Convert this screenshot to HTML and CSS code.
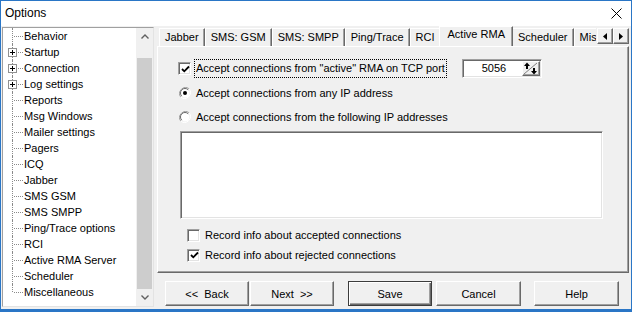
FILE: index.html
```html
<!DOCTYPE html>
<html>
<head>
<meta charset="utf-8">
<link rel="stylesheet" href="styles.css">
</head>
<body>
<div class="window">
  <div class="titlebar">
    <span class="title">Options</span>
    <svg class="close" width="11" height="11" viewBox="0 0 11 11"><path d="M0.5 0.5 L10.5 10.5 M10.5 0.5 L0.5 10.5" stroke="#000" stroke-width="1"/></svg>
  </div>
  <div class="client">
    <div class="tree">
      <ul class="tree-list">
        <li class="node first">Behavior</li>
        <li class="node"><span class="plus"></span>Startup</li>
        <li class="node"><span class="plus"></span>Connection</li>
        <li class="node"><span class="plus"></span>Log settings</li>
        <li class="node">Reports</li>
        <li class="node">Msg Windows</li>
        <li class="node">Mailer settings</li>
        <li class="node">Pagers</li>
        <li class="node">ICQ</li>
        <li class="node">Jabber</li>
        <li class="node">SMS GSM</li>
        <li class="node">SMS SMPP</li>
        <li class="node">Ping/Trace options</li>
        <li class="node">RCI</li>
        <li class="node">Active RMA Server</li>
        <li class="node">Scheduler</li>
        <li class="node last">Miscellaneous</li>
      </ul>
      <div class="vscroll">
        <div class="sb-btn"><svg width="8" height="5" viewBox="0 0 8 5"><path d="M0.5 4.5 L4 1 L7.5 4.5" fill="none" stroke="#606060" stroke-width="1.4"/></svg></div>
        <div class="sb-track"><div class="sb-thumb"></div></div>
        <div class="sb-btn"><svg width="8" height="5" viewBox="0 0 8 5"><path d="M0.5 0.5 L4 4 L7.5 0.5" fill="none" stroke="#606060" stroke-width="1.4"/></svg></div>
      </div>
    </div>
    <div class="main">
      <div class="tabctl">
        <div class="tabs">
          <div class="tab">Jabber</div>
          <div class="tab">SMS: GSM</div>
          <div class="tab">SMS: SMPP</div>
          <div class="tab">Ping/Trace</div>
          <div class="tab">RCI</div>
          <div class="tab active">Active RMA</div>
          <div class="tab">Scheduler</div>
          <div class="tab">Miscellaneous</div>
        </div>
        <div class="tab-arrows">
          <div class="arrow-btn"><svg width="4" height="7" viewBox="0 0 4 7"><path d="M4 0 L0 3.5 L4 7 Z" fill="#000"/></svg></div>
          <div class="arrow-btn"><svg width="4" height="7" viewBox="0 0 4 7"><path d="M0 0 L4 3.5 L0 7 Z" fill="#000"/></svg></div>
        </div>
        <div class="panel">
          <div class="row row-port">
            <span class="check checked"><svg width="9" height="9" viewBox="0 0 9 9"><path d="M1 4 L3.3 6.3 L8 1.5" fill="none" stroke="#000" stroke-width="1.8"/></svg></span>
            <span class="focus-label">Accept connections from "active" RMA on TCP port</span>
            <span class="spin">
              <span class="spin-value">5056</span>
              <span class="spin-btn"><svg width="15" height="13" viewBox="0 0 15 13"><path d="M4 0.5 L1 4 L3 4 L3 7 L5 7 L5 4 L7 4 Z" fill="#000"/><path d="M1 12 L14 1" stroke="#808080" stroke-width="1"/><path d="M11 12.5 L8 9 L10 9 L10 6 L12 6 L12 9 L14 9 Z" fill="#000"/></svg></span>
            </span>
          </div>
          <div class="row row-radio1">
            <span class="radio"><svg width="12" height="12" viewBox="0 0 12 12"><path d="M10.2 1.8 A6 6 0 0 0 1.8 10.2" fill="none" stroke="#a0a0a0" stroke-width="1"/><path d="M1.8 10.2 A6 6 0 0 0 10.2 1.8" fill="none" stroke="#fff" stroke-width="1"/><circle cx="6" cy="6" r="4.5" fill="#fff"/><path d="M9.2 2.8 A4.5 4.5 0 0 0 2.8 9.2" fill="none" stroke="#696969" stroke-width="1"/><circle cx="6" cy="6" r="2" fill="#000"/></svg></span>
            <span class="label">Accept connections from any IP address</span>
          </div>
          <div class="row row-radio2">
            <span class="radio"><svg width="12" height="12" viewBox="0 0 12 12"><path d="M10.2 1.8 A6 6 0 0 0 1.8 10.2" fill="none" stroke="#a0a0a0" stroke-width="1"/><path d="M1.8 10.2 A6 6 0 0 0 10.2 1.8" fill="none" stroke="#fff" stroke-width="1"/><circle cx="6" cy="6" r="4.5" fill="#fff"/><path d="M9.2 2.8 A4.5 4.5 0 0 0 2.8 9.2" fill="none" stroke="#696969" stroke-width="1"/></svg></span>
            <span class="label">Accept connections from the following IP addresses</span>
          </div>
          <div class="listbox"></div>
          <div class="row row-rec1">
            <span class="check"></span>
            <span class="label">Record info about accepted connections</span>
          </div>
          <div class="row row-rec2">
            <span class="check checked"><svg width="9" height="9" viewBox="0 0 9 9"><path d="M1 4 L3.3 6.3 L8 1.5" fill="none" stroke="#000" stroke-width="1.8"/></svg></span>
            <span class="label">Record info about rejected connections</span>
          </div>
        </div>
      </div>
      <div class="buttons">
        <button class="btn btn-back">&lt;&lt;&nbsp; Back</button>
        <button class="btn btn-next">Next&nbsp; &gt;&gt;</button>
        <button class="btn btn-save">Save</button>
        <button class="btn btn-cancel">Cancel</button>
        <button class="btn btn-help">Help</button>
      </div>
    </div>
  </div>
</div>
</body>
</html>
```

FILE: styles.css
```css
* { box-sizing: border-box; }

body {
  margin: 0;
  font-family: "Liberation Sans", Arial, sans-serif;
  font-size: 11px;
  color: #000;
  background: #f0f0f0;
}

.window {
  width: 632px;
  height: 312px;
  border: 1px solid #2a76c6;
  border-bottom-width: 3px;
  background: #f0f0f0;
  display: flex;
  flex-direction: column;
  overflow: hidden;
}

.titlebar {
  height: 25px;
  flex: none;
  background: #fff;
  display: flex;
  align-items: center;
  justify-content: space-between;
  padding: 0 9px 1px 4px;
}

.title {
  font-size: 12px;
  font-family: "Liberation Sans", Arial, sans-serif;
}

.client {
  flex: 1;
  display: flex;
  padding-left: 1px;
  min-height: 0;
  min-width: 0;
}

/* ---------- tree ---------- */
.tree {
  flex: none;
  width: 152px;
  height: 280px;
  margin-top: 1px;
  display: flex;
  background: #fff;
  border: 1px solid;
  border-color: #a0a0a0 #e3e3e3 #e3e3e3 #a0a0a0;
}

.tree-list {
  flex: 1;
  list-style: none;
  margin: 0;
  padding: 0;
  min-width: 0;
}

.node {
  position: relative;
  height: 16px;
  line-height: 16px;
  padding-left: 21px;
  white-space: nowrap;
}

.node::before {
  content: "";
  position: absolute;
  left: 9px;
  top: 0;
  bottom: 0;
  border-left: 1px dotted #8a8a8a;
}

.node.last::before {
  bottom: 8px;
}

.node::after {
  content: "";
  position: absolute;
  left: 11px;
  top: 8px;
  width: 9px;
  border-top: 1px dotted #8a8a8a;
}

.plus {
  position: absolute;
  left: 5px;
  top: 4px;
  width: 9px;
  height: 9px;
  border: 1px solid #919191;
  background: #fff;
  z-index: 1;
}

.plus::before {
  content: "";
  position: absolute;
  left: 1px;
  top: 3px;
  width: 5px;
  height: 1px;
  background: #000;
}

.plus::after {
  content: "";
  position: absolute;
  left: 3px;
  top: 1px;
  width: 1px;
  height: 5px;
  background: #000;
}

.vscroll {
  flex: none;
  width: 17px;
  display: flex;
  flex-direction: column;
  background: #f0f0f0;
}

.sb-btn {
  height: 17px;
  flex: none;
  display: flex;
  align-items: center;
  justify-content: center;
}

.sb-track {
  flex: 1;
  padding: 13px 1px 0 1px;
  display: flex;
}

.sb-thumb {
  flex: 1;
  background: #cdcdcd;
}

/* ---------- tab control ---------- */
.main {
  flex: 1;
  min-width: 0;
  display: flex;
  flex-direction: column;
  padding-left: 1px;
}

.tabctl {
  position: relative;
  margin-left: 2px;
  margin-right: 2px;
}

.tabs {
  height: 20px;
  display: flex;
  align-items: flex-end;
  padding-left: 2px;
  overflow: hidden;
  position: relative;
  z-index: 1;
}

.tab {
  flex: none;
  height: 18px;
  line-height: 16px;
  padding: 0 5px 0 5px;
  border: 1px solid;
  border-bottom: none;
  border-color: #fff #696969 #fff #fff;
  box-shadow: inset -1px 0 #a0a0a0;
  background: #f0f0f0;
  white-space: nowrap;
}

.tab.active {
  height: 21px;
  margin: 0 -1px -1px -2px;
  padding: 0 7px 0 8px;
  line-height: 15px;
  position: relative;
  z-index: 2;
}

.tab-arrows {
  position: absolute;
  right: 0;
  top: 2px;
  display: flex;
  z-index: 3;
  background: #f0f0f0;
  padding-left: 1px;
}

.arrow-btn {
  width: 16px;
  height: 16px;
  display: flex;
  align-items: center;
  justify-content: center;
  background: #f0f0f0;
  border: 1px solid;
  border-color: #fff #696969 #696969 #fff;
  box-shadow: inset -1px -1px #a0a0a0;
}

.panel {
  height: 227px;
  border: 1px solid;
  border-color: #fff #696969 #696969 #fff;
  box-shadow: inset -1px -1px #a0a0a0;
  background: #f0f0f0;
  padding-top: 12px;
}

.row {
  display: flex;
  align-items: center;
  height: 16px;
  white-space: nowrap;
}

.row-port {
  height: 19px;
  padding-left: 20px;
}

.row-radio1 {
  margin-top: 7px;
  padding-left: 21px;
}

.row-radio2 {
  margin-top: 8px;
  padding-left: 21px;
}

.row-rec1 {
  margin-top: 8px;
  padding-left: 29px;
}

.row-rec2 {
  margin-top: 4px;
  padding-left: 29px;
}

.row-radio1 .label,
.row-radio2 .label {
  margin-left: 5px;
}

.row-rec1 .label,
.row-rec2 .label {
  margin-left: 5px;
}

.check {
  flex: none;
  width: 13px;
  height: 13px;
  background: #fff;
  border: 1px solid;
  border-color: #a0a0a0 #fff #fff #a0a0a0;
  box-shadow: inset 1px 1px #696969, inset -1px -1px #e3e3e3;
  display: flex;
  align-items: center;
  justify-content: center;
  padding: 1px 0 0 1px;
}

.radio {
  flex: none;
  width: 12px;
  height: 12px;
  display: flex;
}

.focus-label {
  margin-left: 3px;
  height: 19px;
  line-height: 17px;
  padding: 0 1px;
  border: 1px dotted #000;
}

.spin {
  margin-left: 15px;
  width: 80px;
  height: 19px;
  display: flex;
  background: #fff;
  border: 1px solid;
  border-color: #a0a0a0 #fff #fff #a0a0a0;
  box-shadow: inset 1px 1px #696969, inset -1px -1px #e3e3e3;
  padding: 1px;
}

.spin-value {
  flex: 1;
  text-align: center;
  line-height: 15px;
  padding-left: 2px;
}

.spin-btn {
  width: 18px;
  flex: none;
  background: #f0f0f0;
  border: 1px solid;
  border-color: #fff #696969 #696969 #fff;
  box-shadow: inset -1px -1px #a0a0a0;
  display: flex;
  align-items: center;
  justify-content: center;
}

.listbox {
  margin: 6px 0 0 22px;
  width: 423px;
  height: 88px;
  background: #fff;
  border: 1px solid;
  border-color: #a0a0a0 #fff #fff #a0a0a0;
  box-shadow: inset 1px 1px #696969, inset -1px -1px #e3e3e3;
}

/* ---------- buttons ---------- */
.buttons {
  display: flex;
  margin-top: 8px;
  padding-left: 10px;
}

.btn {
  flex: none;
  height: 25px;
  width: 84px;
  font-family: "Liberation Sans", Arial, sans-serif;
  font-size: 11px;
  color: #000;
  background: #f0f0f0;
  border: 1px solid;
  border-color: #fff #696969 #696969 #fff;
  box-shadow: inset -1px -1px #a0a0a0;
  padding: 0;
  margin: 0;
}

.btn-next { margin-left: 1px; }
.btn-save {
  margin-left: 14px;
  border-color: #3c3c3c;
  box-shadow: inset 1px 1px #fff, inset -1px -1px #696969, inset -2px -2px #a0a0a0;
}
.btn-cancel { margin-left: 4px; width: 85px; }
.btn-help { margin-left: 13px; width: 85px; }
```
